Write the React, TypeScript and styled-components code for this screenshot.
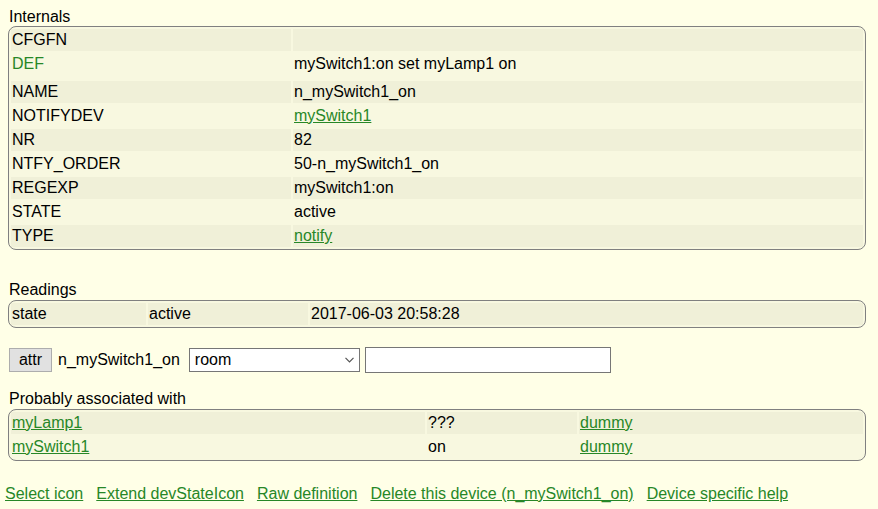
import React from "react";
import styled, { createGlobalStyle } from "styled-components";

const GlobalStyle = createGlobalStyle`
  html, body { margin: 0; padding: 0; background: #FFFFE7; }
  body { font-family: "Liberation Sans", Arial, sans-serif; font-size: 16px; color: #000; }
`;

const Page = styled.div`
  padding: 8px 0 0 8px;
  width: 858px;
`;

const Title = styled.div<{ $top?: number }>`
  line-height: 18px;
  height: 18px;
  padding-left: 1px;
  margin-top: ${(p) => p.$top ?? 0}px;
`;

const Block = styled.table<{ $top?: number }>`
  width: 858px;
  margin-top: ${(p) => p.$top ?? 0}px;
  border: 1px solid #808080;
  border-radius: 8px;
  background: #F8F8E0;
  border-collapse: separate;
  border-spacing: 2px;
  table-layout: fixed;
`;

const Row = styled.tr<{ $odd?: boolean }>`
  background: ${(p) => (p.$odd ? "#F0F0D8" : "transparent")};
`;

const Cell = styled.td<{ $tall?: boolean }>`
  padding: ${(p) => (p.$tall ? "1px 1px 5px" : "1px 1px")};
  line-height: 20px;
  white-space: nowrap;
  vertical-align: middle;
`;

const GreenText = styled.span`
  color: #278727;
`;

const Link = styled.a`
  color: #278727;
  text-decoration: underline;
  cursor: pointer;
`;

const AttrRow = styled.div`
  display: flex;
  align-items: center;
  margin-top: 19px;
  height: 26px;
  padding-left: 1px;
`;

const AttrButton = styled.button`
  font-family: "Liberation Sans", Arial, sans-serif;
  font-size: 16px;
  width: 43px;
  height: 24px;
  padding: 0;
  background: #E1E1E1;
  border: 1px solid #ADADAD;
  border-radius: 0;
  color: #000;
`;

const DevName = styled.span`
  margin-left: 6px;
  margin-right: 9px;
`;

const SelectWrap = styled.div`
  position: relative;
  width: 171px;
  height: 24px;
`;

const Select = styled.select`
  appearance: none;
  -webkit-appearance: none;
  font-family: "Liberation Sans", Arial, sans-serif;
  font-size: 16px;
  width: 171px;
  height: 24px;
  box-sizing: border-box;
  background: #fff;
  border: 1px solid #767676;
  border-radius: 0;
  padding: 0 20px 1px 5px;
  color: #000;
  outline: none;
`;

const Chevron = styled.svg`
  position: absolute;
  right: 6px;
  top: 9px;
  width: 9px;
  height: 6px;
  pointer-events: none;
`;

const TextInput = styled.input`
  font-family: "Liberation Sans", Arial, sans-serif;
  font-size: 16px;
  width: 246px;
  height: 26px;
  box-sizing: border-box;
  margin-left: 5px;
  background: #fff;
  border: 1px solid #767676;
  border-radius: 0;
`;

const LinkBar = styled.div`
  display: flex;
  gap: 13px;
  margin-top: 24px;
  margin-left: -3px;
  line-height: 18px;
`;

const internals: { k: string; v: string; link?: boolean; green?: boolean; tall?: boolean }[] = [
  { k: "CFGFN", v: "" },
  { k: "DEF", v: "mySwitch1:on set myLamp1 on", green: true, tall: true },
  { k: "NAME", v: "n_mySwitch1_on" },
  { k: "NOTIFYDEV", v: "mySwitch1", link: true },
  { k: "NR", v: "82" },
  { k: "NTFY_ORDER", v: "50-n_mySwitch1_on" },
  { k: "REGEXP", v: "mySwitch1:on" },
  { k: "STATE", v: "active" },
  { k: "TYPE", v: "notify", link: true },
];

const assoc = [
  { name: "myLamp1", state: "???", type: "dummy" },
  { name: "mySwitch1", state: "on", type: "dummy" },
];

export default function App() {
  return (
    <>
      <GlobalStyle />
      <Page>
        <Title>Internals</Title>
        <Block>
          <colgroup>
            <col style={{ width: 280 }} />
            <col />
          </colgroup>
          <tbody>
            {internals.map((r, i) => (
              <Row key={r.k} $odd={i % 2 === 0}>
                <Cell $tall={r.tall}>{r.green ? <GreenText>{r.k}</GreenText> : r.k}</Cell>
                <Cell $tall={r.tall}>{r.link ? <Link>{r.v}</Link> : r.v}</Cell>
              </Row>
            ))}
          </tbody>
        </Block>

        <Title $top={31}>Readings</Title>
        <Block $top={1}>
          <colgroup>
            <col style={{ width: 135 }} />
            <col style={{ width: 160 }} />
            <col />
          </colgroup>
          <tbody>
            <Row $odd>
              <Cell>state</Cell>
              <Cell>active</Cell>
              <Cell>2017-06-03 20:58:28</Cell>
            </Row>
          </tbody>
        </Block>

        <AttrRow>
          <AttrButton>attr</AttrButton>
          <DevName>n_mySwitch1_on</DevName>
          <SelectWrap>
            <Select defaultValue="room">
              <option value="room">room</option>
            </Select>
            <Chevron viewBox="0 0 9 6">
              <path d="M0.5 0.8 L4.5 4.8 L8.5 0.8" fill="none" stroke="#555" strokeWidth="1.2" />
            </Chevron>
          </SelectWrap>
          <TextInput type="text" />
        </AttrRow>

        <Title $top={17}>Probably associated with</Title>
        <Block $top={1}>
          <colgroup>
            <col style={{ width: 414 }} />
            <col style={{ width: 150 }} />
            <col />
          </colgroup>
          <tbody>
            {assoc.map((a, i) => (
              <Row key={a.name} $odd={i % 2 === 0}>
                <Cell><Link>{a.name}</Link></Cell>
                <Cell>{a.state}</Cell>
                <Cell><Link>{a.type}</Link></Cell>
              </Row>
            ))}
          </tbody>
        </Block>

        <LinkBar>
          <Link>Select icon</Link>
          <Link>Extend devStateIcon</Link>
          <Link>Raw definition</Link>
          <Link>Delete this device (n_mySwitch1_on)</Link>
          <Link>Device specific help</Link>
        </LinkBar>
      </Page>
    </>
  );
}
